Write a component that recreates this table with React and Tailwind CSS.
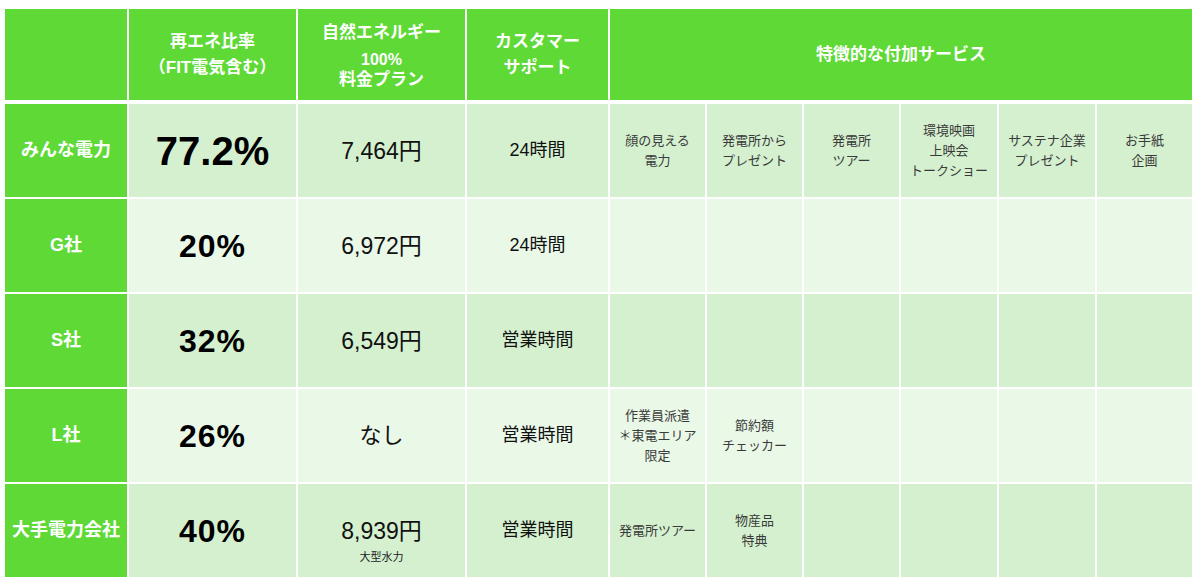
import React from "react";

const COLS = "grid grid-cols-[122px_167px_167px_141px_95px_95px_95px_96px_96px_95px] gap-x-[2px]";

const rows = [
  {
    name: "みんな電力",
    pct: "77.2%",
    big: true,
    price: "7,464円",
    support: "24時間",
    bg: "bg-[#d4f0cf]",
    features: [
      ["顔の見える", "電力"],
      ["発電所から", "プレゼント"],
      ["発電所", "ツアー"],
      ["環境映画", "上映会", "トークショー"],
      ["サステナ企業", "プレゼント"],
      ["お手紙", "企画"],
    ],
  },
  {
    name: "G社",
    pct: "20%",
    price: "6,972円",
    support: "24時間",
    bg: "bg-[#eaf8e8]",
    features: [[], [], [], [], [], []],
  },
  {
    name: "S社",
    pct: "32%",
    price: "6,549円",
    support: "営業時間",
    bg: "bg-[#d4f0cf]",
    features: [[], [], [], [], [], []],
  },
  {
    name: "L社",
    pct: "26%",
    price: "なし",
    support: "営業時間",
    bg: "bg-[#eaf8e8]",
    features: [["作業員派遣", "＊東電エリア", "限定"], ["節約額", "チェッカー"], [], [], [], []],
  },
  {
    name: "大手電力会社",
    pct: "40%",
    price: "8,939円",
    note: "大型水力",
    support: "営業時間",
    bg: "bg-[#d4f0cf]",
    features: [["発電所ツアー"], ["物産品", "特典"], [], [], [], []],
  },
];

export default function App() {
  return (
    <div
      className="w-[1200px] h-[585px] bg-white pt-[9px] pl-[5px] overflow-hidden"
      style={{ fontFamily: '"Liberation Sans", "Noto Sans CJK JP", sans-serif' }}
    >
      <div className="flex flex-col gap-[4px]">
        {/* Header */}
        <div className={`${COLS} h-[91px] text-white font-bold text-[17px]`}>
          <div className="bg-[#5ed936]" />
          <div className="bg-[#5ed936] flex flex-col items-center justify-center leading-[26px]">
            <div>再エネ比率</div>
            <div>（FIT電気含む）</div>
          </div>
          <div className="bg-[#5ed936] flex flex-col items-center justify-center">
            <div className="leading-[26px]">自然エネルギー</div>
            <div className="leading-[20px] mt-[4px] text-[16px]">100%</div>
            <div className="leading-[20px]">料金プラン</div>
          </div>
          <div className="bg-[#5ed936] flex flex-col items-center justify-center leading-[26px]">
            <div>カスタマー</div>
            <div>サポート</div>
          </div>
          <div className="col-span-6 bg-[#5ed936] flex items-center justify-center">
            特徴的な付加サービス
          </div>
        </div>

        {/* Body */}
        <div className={`${COLS} gap-y-[2px] auto-rows-[93px]`}>
          {rows.map((r) => (
            <React.Fragment key={r.name}>
              <div className="bg-[#5ed936] flex items-center justify-center text-white font-bold text-[18px]">
                {r.name}
              </div>
              <div className={`${r.bg} flex items-center justify-center font-bold text-black`}>
                <span className={r.big ? "text-[40px] leading-none" : "text-[32px] leading-none tracking-[1px]"}>
                  {r.pct}
                </span>
              </div>
              <div className={`${r.bg} flex flex-col items-center justify-center text-[#111]`}>
                {r.note ? (
                  <>
                    <div className="text-[23px] leading-[28px] pt-[19px]">{r.price}</div>
                    <div className="text-[11px] leading-[13px] mt-[6px] text-[#222]">{r.note}</div>
                  </>
                ) : (
                  <div className={r.price === "なし" ? "text-[22px] leading-[28px]" : "text-[23px] leading-[28px]"}>
                    {r.price}
                  </div>
                )}
              </div>
              <div className={`${r.bg} flex items-center justify-center text-[18px] text-[#111]`}>
                {r.support}
              </div>
              {r.features.map((f, i) => (
                <div
                  key={i}
                  className={`${r.bg} flex flex-col items-center justify-center text-[13px] leading-[20px] text-[#3a3a3a] text-center`}
                >
                  {f.map((line, j) => (
                    <div key={j} className="whitespace-nowrap">
                      {line}
                    </div>
                  ))}
                </div>
              ))}
            </React.Fragment>
          ))}
        </div>
      </div>
    </div>
  );
}
